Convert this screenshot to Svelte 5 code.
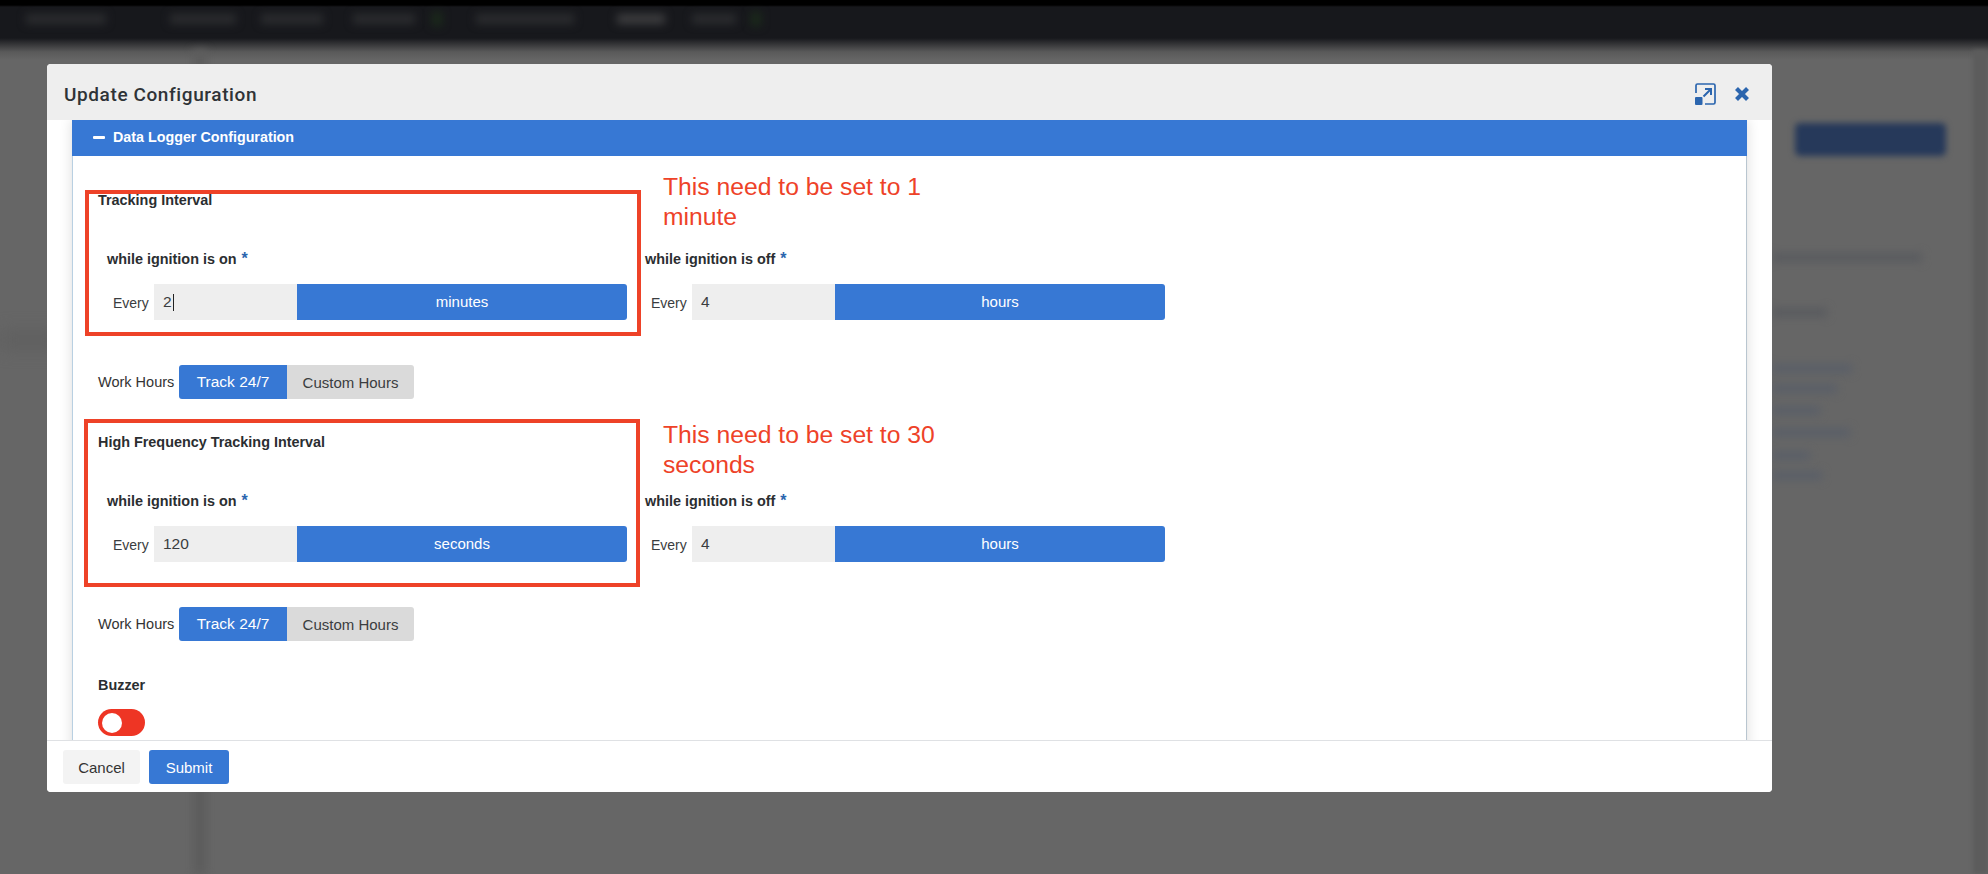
<script>
    const links = [
        { y: 368, w: 80 }, { y: 388, w: 65 }, { y: 410, w: 48 },
        { y: 432, w: 78 }, { y: 455, w: 38 }, { y: 475, w: 50 }
    ];
    const navItems = [
        { x: 26, w: 80 }, { x: 170, w: 66 }, { x: 261, w: 62 }, { x: 353, w: 62 },
        { x: 476, w: 98 }, { x: 617, w: 48, bright: true }, { x: 692, w: 44 }
    ];
</script>

{#snippet interval(title, onValue, onUnit, caret)}
    <h4 class="section-title">{title}</h4>
    <div class="columns">
        {@render field('while ignition is on', onValue, onUnit, caret)}
        {@render field('while ignition is off', '4', 'hours', false)}
    </div>
    <div class="work-hours">
        <span>Work Hours</span>
        <div class="btn-group">
            <button class="active">Track 24/7</button>
            <button>Custom Hours</button>
        </div>
    </div>
{/snippet}

{#snippet field(label, value, unit, caret)}
    <div class="field">
        <div class="field-label">{label} <span class="req">*</span></div>
        <div class="field-row">
            <span class="every">Every</span>
            <div class="value">{value}{#if caret}<i class="caret"></i>{/if}</div>
            <div class="unit">{unit}</div>
        </div>
    </div>
{/snippet}

<!-- the page behind the dialog, out of focus -->
<div class="behind" aria-hidden="true">
    <div class="navbar"></div>
    {#each navItems as item}
        <div class="nav-item" class:bright={item.bright} style="left: {item.x}px; width: {item.w}px;"></div>
    {/each}
    <div class="nav-dot" style="left: 432px;"></div>
    <div class="nav-dot" style="left: 751px;"></div>
    <div class="stripe"></div>
    <div class="stripe-right"></div>
    <div class="band"></div>
    <div class="page-btn"></div>
    <div class="side-line" style="top: 253px; width: 150px;"></div>
    <div class="side-line" style="top: 308px; width: 55px;"></div>
    {#each links as link}
        <div class="side-link" style="top: {link.y - 4}px; width: {link.w}px;"></div>
    {/each}
</div>

<div class="modal">
    <header class="modal-head">
        <h2>Update Configuration</h2>
        <div class="head-icons">
            <svg width="21" height="22" viewBox="0 0 21 22" fill="none">
                <path d="M1 10V2.5A1.5 1.5 0 0 1 2.500 1H18.500A1.500 1.500 0 0 1 20 2.500V19.500A1.500 1.500 0 0 1 18.500 21H10" stroke="#2b65ae" stroke-width="1.700"/>
                <rect x="0" y="14" width="7.500" height="8" rx="1" fill="#2b65ae"/>
                <path d="M8.500 13.500L15 7M10 6H16V12" stroke="#2b65ae" stroke-width="2"/>
            </svg>
            <svg width="16" height="16" viewBox="0 0 16 16">
                <path d="M2.500 2.500L13.500 13.500M13.500 2.500L2.500 13.500" stroke="#2b65ae" stroke-width="4.200"/>
            </svg>
        </div>
    </header>

    <div class="modal-body">
        <div class="panel">
            <div class="panel-head">
                <i class="minus"></i>
                <span>Data Logger Configuration</span>
            </div>
            <div class="panel-body">
                {@render interval('Tracking Interval', '2', 'minutes', true)}
                {@render interval('High Frequency Tracking Interval', '120', 'seconds', false)}
                <h4 class="section-title buzzer">Buzzer</h4>
                <div class="toggle"><i></i></div>
            </div>
        </div>
    </div>

    <footer class="modal-foot">
        <button class="cancel">Cancel</button>
        <button class="submit">Submit</button>
    </footer>

    <!-- red annotations drawn over the screenshot -->
    <div class="mark mark-one"></div>
    <div class="note note-one">This need to be set to 1 minute</div>
    <div class="mark mark-two"></div>
    <div class="note note-two">This need to be set to 30 seconds</div>
</div>

<style>
    :global(body) {
        background: #666;
        font-family: "Liberation Sans", Arial, sans-serif;
        overflow: hidden;
    }

    .behind {
        position: absolute;
        inset: 0;
        height: 874px;
        overflow: hidden;
    }

    .navbar {
        position: absolute;
        top: 0;
        left: 0;
        right: 0;
        height: 60px;
        background: linear-gradient(#000 0, #000 5px, #17181c 7px, #17181c 38px, #5a5a5a 52px, #666 60px);
    }

    .nav-item {
        position: absolute;
        top: 14px;
        height: 10px;
        background: #2b2c2f;
        filter: blur(4px);
    }

    .nav-item.bright {
        background: #3d3d3f;
    }

    .nav-dot {
        position: absolute;
        top: 12px;
        width: 10px;
        height: 14px;
        background: #1b2a1b;
        filter: blur(4px);
    }

    .stripe {
        position: absolute;
        top: 50px;
        bottom: 0;
        left: 193px;
        width: 14px;
        background: #5d5d5d;
        filter: blur(4px);
    }

    .stripe-right {
        position: absolute;
        top: 50px;
        bottom: 0;
        right: 0;
        width: 15px;
        background: #5c5c5c;
        filter: blur(2px);
    }

    .band {
        position: absolute;
        top: 330px;
        left: 0;
        width: 60px;
        height: 20px;
        background: #606060;
        filter: blur(8px);
    }

    .page-btn {
        position: absolute;
        top: 123px;
        left: 1795px;
        width: 151px;
        height: 33px;
        border-radius: 5px;
        background: #26395a;
        filter: blur(3px);
    }

    .side-line,
    .side-link {
        position: absolute;
        left: 1772px;
        height: 9px;
        background: #595b5f;
        filter: blur(4px);
    }

    .side-link {
        background: #5a5f68;
    }

    .modal {
        position: absolute;
        top: 64px;
        left: 47px;
        width: 1725px;
        height: 728px;
        display: flex;
        flex-direction: column;
        background: #fff;
        border-radius: 4px;
        overflow: hidden;
    }

    .modal-head {
        flex: none;
        height: 56px;
        display: flex;
        align-items: center;
        justify-content: space-between;
        padding: 4px 22px 0 17px;
        box-sizing: border-box;
        background: #eee;
    }

    h2 {
        margin: 0;
        font: 500 19px/1 Roboto, sans-serif;
        letter-spacing: 0.600px;
        color: #2f3337;
    }

    .head-icons {
        display: flex;
        align-items: center;
        gap: 18px;
    }

    .modal-body {
        flex: 1;
        min-height: 0;
        padding: 0 25px;
        overflow: hidden;
    }

    .panel {
        box-shadow: 0 0 12px rgba(0, 0, 0, 0.14);
    }

    .panel-head {
        height: 36px;
        display: flex;
        align-items: center;
        gap: 8px;
        padding: 0 0 2px 21px;
        box-sizing: border-box;
        background: #3778d4;
        color: #fff;
        font: 700 14.300px/1 "Liberation Sans", sans-serif;
    }

    .minus {
        width: 12px;
        height: 3px;
        background: #fff;
        border-radius: 1px;
    }

    .panel-body {
        height: 600px;
        padding: 35px 25px 0;
        border-left: 1px solid #b9d0e2;
        border-right: 1px solid #b9c6d0;
        background: #fff;
        overflow: hidden;
    }

    .section-title {
        margin: 0 0 41px;
        font: 700 14.400px/18px "Liberation Sans", sans-serif;
        color: #2b2e31;
    }

    .columns {
        display: flex;
        padding-left: 9px;
    }

    .field {
        width: 538px;
    }

    .field-label {
        margin-bottom: 16px;
        font: 700 14.400px/18px "Liberation Sans", sans-serif;
        color: #2b2e31;
    }

    .req {
        margin-left: 1px;
        font-size: 16px;
        color: #2b65ae;
    }

    .field-row {
        display: flex;
        height: 36px;
        padding-left: 6px;
        color: #3a3d40;
        font-size: 14px;
    }

    .every {
        width: 41px;
        line-height: 38px;
    }

    .value {
        width: 143px;
        padding-left: 9px;
        box-sizing: border-box;
        display: flex;
        align-items: center;
        font-size: 15.500px;
        background: #eee;
    }

    .caret {
        width: 1px;
        height: 17px;
        margin-left: 1px;
        background: #222;
    }

    .unit {
        width: 330px;
        line-height: 35px;
        font-size: 15px;
        text-align: center;
        background: #3778d4;
        color: #fff;
        border-radius: 0 3px 3px 0;
    }

    .work-hours {
        display: flex;
        align-items: center;
        gap: 4px;
        margin: 45px 0 34px;
        height: 34px;
        font-size: 14.500px;
        color: #333;
    }

    .work-hours span {
        width: 77px;
    }

    .btn-group {
        display: flex;
    }

    button {
        border: 0;
        font: 15px "Liberation Sans", sans-serif;
        height: 34px;
    }

    .btn-group button {
        width: 127px;
        background: #dadada;
        color: #3a3d40;
        border-radius: 0 3px 3px 0;
        padding: 0;
    }

    .btn-group .active {
        width: 108px;
        font-size: 15.500px;
        background: #3778d4;
        color: #fff;
        border-radius: 3px 0 0 3px;
    }

    .buzzer {
        margin: 35px 0 15px;
    }

    .toggle {
        width: 47px;
        height: 27px;
        border-radius: 14px;
        background: #ee3524;
        display: flex;
        align-items: center;
        padding-left: 4px;
        box-sizing: border-box;
    }

    .toggle i {
        width: 20px;
        height: 20px;
        border-radius: 50%;
        background: #fff;
    }

    .modal-foot {
        flex: none;
        position: relative;
        height: 52px;
        display: flex;
        align-items: flex-start;
        gap: 9px;
        padding: 9px 16px 0;
        box-sizing: border-box;
        border-top: 1px solid #dfe1e4;
        background: #fff;
    }

    .cancel {
        width: 77px;
        background: #f3f3f3;
        color: #333;
        border-radius: 3px;
    }

    .submit {
        width: 80px;
        background: #3778d4;
        color: #fff;
        border-radius: 3px;
    }

    .mark {
        position: absolute;
        border: 4px solid #ee4228;
        box-sizing: border-box;
    }

    .mark-one {
        top: 126px;
        left: 38px;
        width: 556px;
        height: 146px;
    }

    .mark-two {
        top: 355px;
        left: 37px;
        width: 556px;
        height: 168px;
    }

    .note {
        position: absolute;
        left: 616px;
        width: 300px;
        font-size: 24.700px;
        line-height: 30px;
        color: #ee4228;
    }

    .note-one {
        top: 108px;
    }

    .note-two {
        top: 356px;
    }
</style>
